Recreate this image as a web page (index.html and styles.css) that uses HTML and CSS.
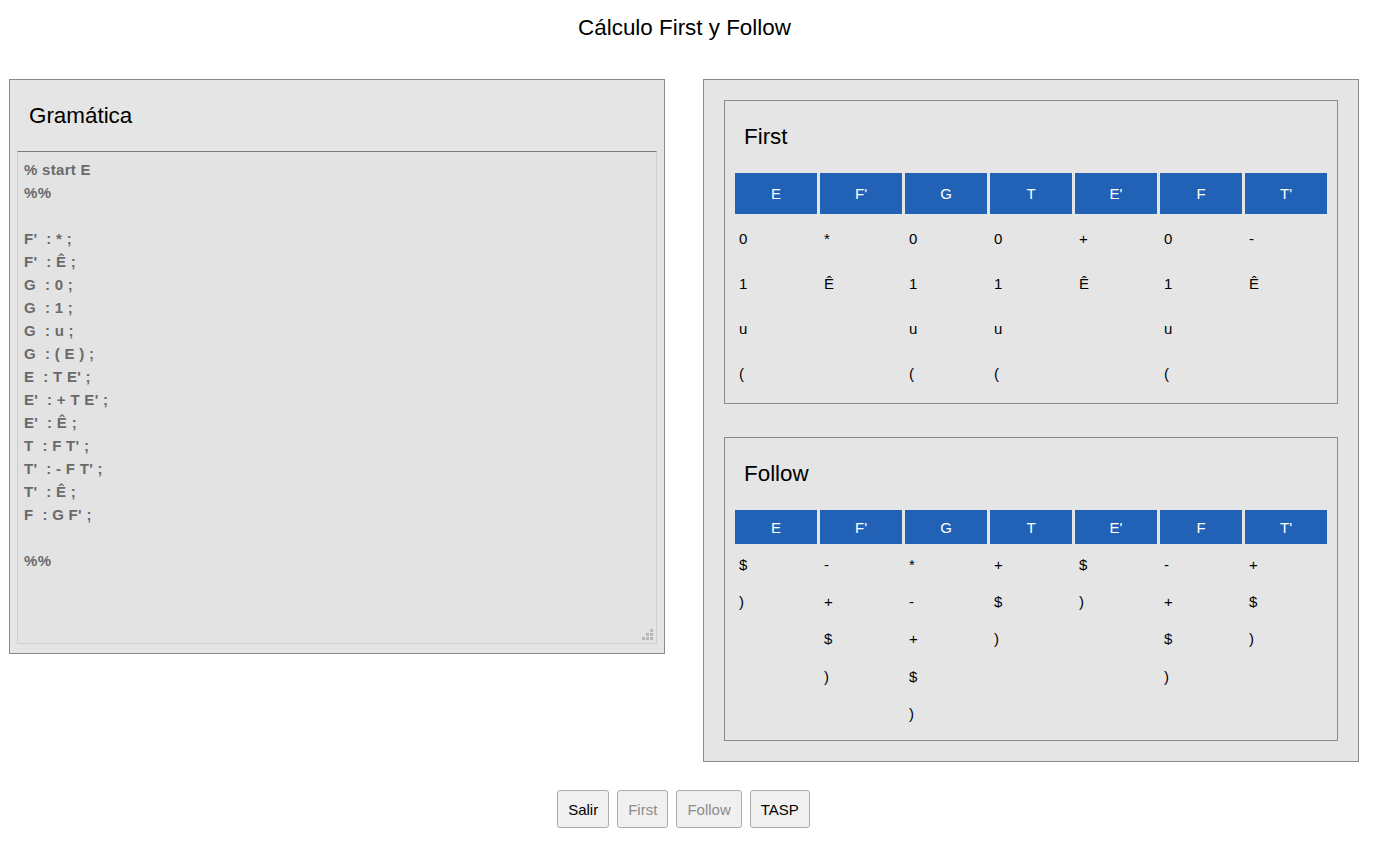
FILE: index.html
```html
<!DOCTYPE html>
<html lang="es">
<head>
<meta charset="utf-8">
<title>Cálculo First y Follow</title>
<link rel="stylesheet" href="styles.css">
</head>
<body>
<h1 class="page-title">Cálculo First y Follow</h1>
<div class="panels">
  <section class="panel panel-grammar">
    <h2 class="panel-title">Gramática</h2>
    <div class="editor-wrap">
      <textarea class="editor" spellcheck="false">% start E
%%

F'  : * ;
F'  : Ê ;
G  : 0 ;
G  : 1 ;
G  : u ;
G  : ( E ) ;
E  : T E' ;
E'  : + T E' ;
E'  : Ê ;
T  : F T' ;
T'  : - F T' ;
T'  : Ê ;
F  : G F' ;

%%</textarea>
      <span class="grip" aria-hidden="true">
        <i></i><i></i><i></i><i></i><i></i><i></i>
      </span>
    </div>
  </section>
  <section class="panel panel-results">
    <div class="box">
      <h2 class="box-title">First</h2>
      <table class="sets sets-first">
        <thead>
          <tr><th>E</th><th>F'</th><th>G</th><th>T</th><th>E'</th><th>F</th><th>T'</th></tr>
        </thead>
        <tbody>
          <tr><td>0</td><td>*</td><td>0</td><td>0</td><td>+</td><td>0</td><td>-</td></tr>
          <tr><td>1</td><td>Ê</td><td>1</td><td>1</td><td>Ê</td><td>1</td><td>Ê</td></tr>
          <tr><td>u</td><td></td><td>u</td><td>u</td><td></td><td>u</td><td></td></tr>
          <tr><td>(</td><td></td><td>(</td><td>(</td><td></td><td>(</td><td></td></tr>
        </tbody>
      </table>
    </div>
    <div class="box box-follow">
      <h2 class="box-title">Follow</h2>
      <table class="sets sets-follow">
        <thead>
          <tr><th>E</th><th>F'</th><th>G</th><th>T</th><th>E'</th><th>F</th><th>T'</th></tr>
        </thead>
        <tbody>
          <tr><td>$</td><td>-</td><td>*</td><td>+</td><td>$</td><td>-</td><td>+</td></tr>
          <tr><td>)</td><td>+</td><td>-</td><td>$</td><td>)</td><td>+</td><td>$</td></tr>
          <tr><td></td><td>$</td><td>+</td><td>)</td><td></td><td>$</td><td>)</td></tr>
          <tr><td></td><td>)</td><td>$</td><td></td><td></td><td>)</td><td></td></tr>
          <tr><td></td><td></td><td>)</td><td></td><td></td><td></td><td></td></tr>
        </tbody>
      </table>
    </div>
  </section>
</div>
<div class="actions">
  <button class="btn" type="button">Salir</button>
  <button class="btn" type="button" disabled>First</button>
  <button class="btn" type="button" disabled>Follow</button>
  <button class="btn" type="button">TASP</button>
</div>
</body>
</html>
```

FILE: styles.css
```css
html, body {
  background: #ffffff;
}
body {
  margin: 8px;
  font-family: "Liberation Sans", Arial, sans-serif;
  color: #000;
}
.page-title {
  margin: 7px 0 38px;
  padding-right: 4px;
  font-size: 22.4px;
  line-height: 26px;
  font-weight: normal;
  text-align: center;
}
.panels {
  display: flex;
  align-items: flex-start;
  gap: 38px;
  padding-left: 1px;
}
.panel {
  box-sizing: border-box;
  width: 656px;
  flex: 0 0 656px;
  background: #e5e5e5;
  border: 1px solid #8a8a8a;
}
.panel-grammar {
  padding: 0 7px 9px;
}
.panel-title {
  margin: 23px 0 22px 12px;
  font-size: 22.4px;
  line-height: 26px;
  font-weight: normal;
}
.editor-wrap {
  position: relative;
}
.editor {
  display: block;
  box-sizing: border-box;
  width: 100%;
  height: 493px;
  margin: 0;
  padding: 6px 6px;
  resize: none;
  background: #e3e3e3;
  border: 1px solid #cfcfcf;
  border-top-color: #7a7a7a;
  font-family: "Liberation Sans", Arial, sans-serif;
  font-size: 15px;
  font-weight: bold;
  letter-spacing: 0.3px;
  line-height: 23px;
  color: #6a6a6a;
  outline: none;
  overflow: hidden;
}
.grip {
  position: absolute;
  right: 4px;
  bottom: 4px;
  width: 11px;
  height: 11px;
  display: grid;
  grid-template-columns: repeat(3, 3px);
  grid-template-rows: repeat(3, 3px);
  gap: 1px;
}
.grip i {
  display: block;
  background: #b8b8b8;
}
.grip i:nth-child(1) { grid-column: 3; grid-row: 1; }
.grip i:nth-child(2) { grid-column: 2; grid-row: 2; }
.grip i:nth-child(3) { grid-column: 3; grid-row: 2; }
.grip i:nth-child(4) { grid-column: 1; grid-row: 3; }
.grip i:nth-child(5) { grid-column: 2; grid-row: 3; }
.grip i:nth-child(6) { grid-column: 3; grid-row: 3; }

.panel-results {
  padding: 20px;
}
.box {
  box-sizing: border-box;
  height: 304px;
  padding: 0 7px;
  border: 1px solid #8a8a8a;
}
.box-follow {
  margin-top: 33px;
}
.box-title {
  margin: 23px 0 20px 12px;
  font-size: 22.4px;
  line-height: 26px;
  font-weight: normal;
}
.sets {
  width: 100%;
  table-layout: fixed;
  border-collapse: separate;
  border-spacing: 3px;
  font-size: 15px;
}
.sets th,
.sets td {
  padding: 0 4px;
  vertical-align: middle;
}
.sets-first th { height: 41px; }
.sets-first td { height: 42px; }
.sets-follow th { height: 34px; }
.sets-follow td { height: 34.4px; }
.sets th {
  background: #2162b6;
  color: #ffffff;
  font-weight: normal;
  text-align: center;
}
.sets td {
  text-align: left;
  color: #000;
}
.actions {
  display: flex;
  justify-content: center;
  gap: 8px;
  margin-top: 28px;
  padding-right: 6px;
}
.btn {
  height: 38px;
  padding: 0 10px;
  background: #f0f0f0;
  border: 1px solid #adadad;
  border-radius: 3px;
  font-family: "Liberation Sans", Arial, sans-serif;
  font-size: 15px;
  color: #000;
}
.btn:disabled {
  color: #8c8c8c;
}
```
